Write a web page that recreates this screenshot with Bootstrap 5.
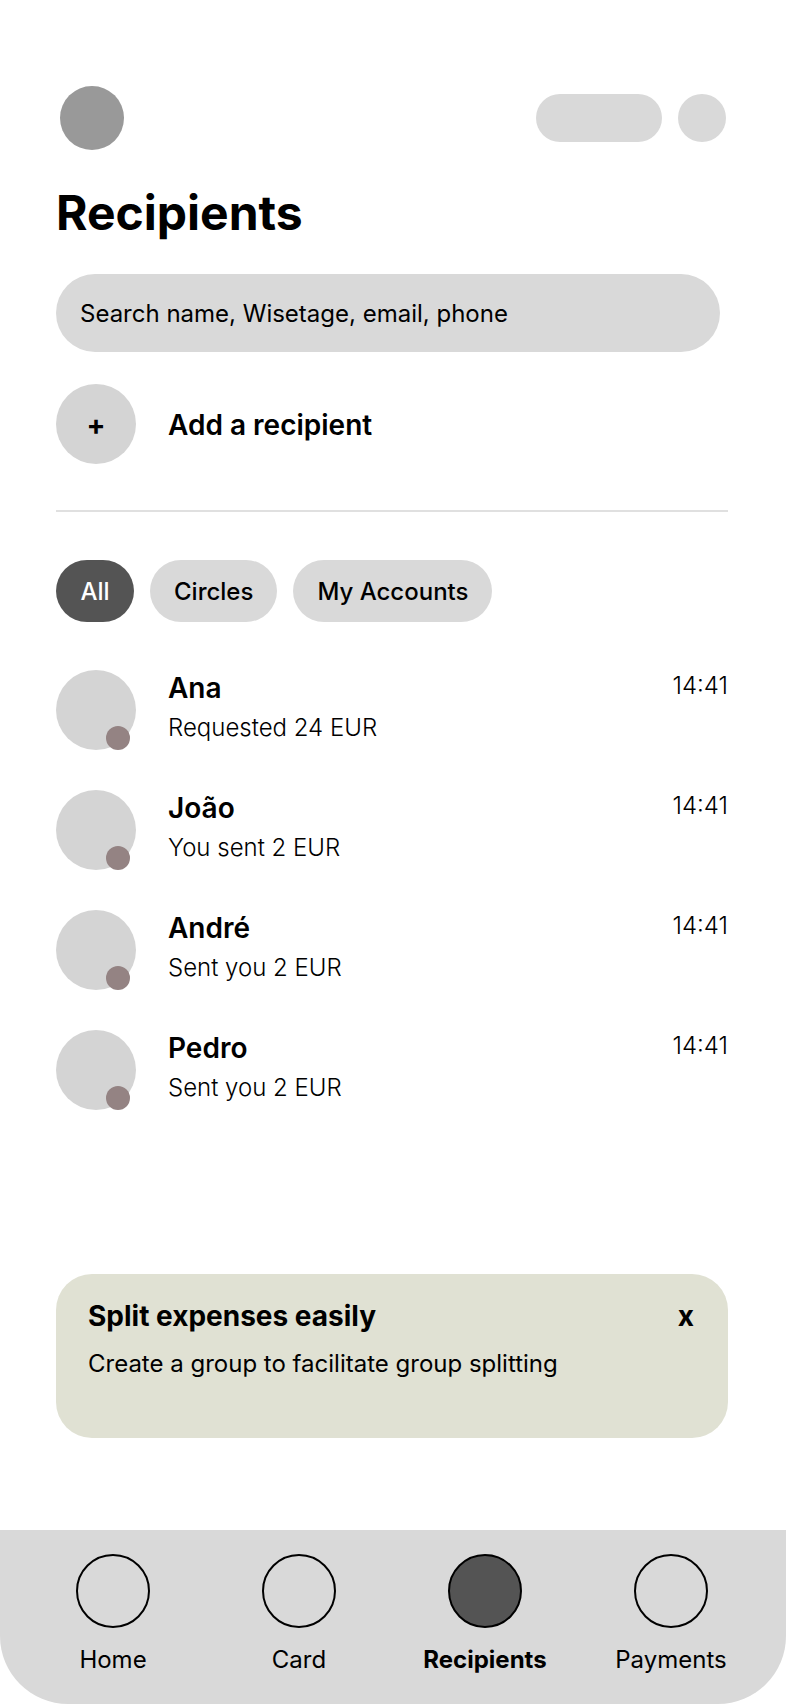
<!DOCTYPE html>
<html lang="en">
<head>
<meta charset="utf-8">
<meta name="viewport" content="width=device-width, initial-scale=1">
<title>Recipients</title>
<link rel="stylesheet" href="https://cdn.jsdelivr.net/npm/bootstrap@5.3.0/dist/css/bootstrap.min.css">
<style>
  body { font-family: Inter, "Liberation Sans", sans-serif; font-size: 24px; line-height: 32px; color: #000; background: #fff; }
  button { border: 0; padding: 0; color: inherit; background: none; }
  .screen { padding: 86px 58px 92px 56px; }
  .topbar { padding: 0 2px 0 4px; margin-bottom: 34px; }
  .profile-btn { width: 64px; height: 64px; background: #999; }
  .soft { background: #d9d9d9; }
  .earn-btn { width: 126px; height: 48px; }
  .eye-btn { width: 48px; height: 48px; }
  .page-title { font-size: 48px; line-height: 58px; font-weight: 700; margin-bottom: 32px; }
  .search-form { margin: 0 8px 32px 0; }
  .search-box, .search-box:focus { padding: 24px; border: 0; font-size: 24px; line-height: 30px; height: 78px; color: #000; background: #d9d9d9; }
  .search-box::placeholder { color: #000; opacity: 1; }
  .disc { position: relative; flex: none; width: 80px; height: 80px; border-radius: 50%; background: #d4d4d4; }
  .disc-dot { position: absolute; right: 6px; bottom: 0; width: 24px; height: 24px; border-radius: 50%; background: #948383; }
  .row-gap { gap: 32px; }
  .item-title { font-size: 28px; line-height: 36px; font-weight: 600; margin: 0; }
  .add-row .disc, .add-row .item-title { padding-top: 2px; }
  .add-row .disc { font-size: 28px; }
  .thin { font-weight: 300; }
  .rule { height: 2px; margin: 46px 0 48px; border: 0; opacity: 1; background: #e0e0e0; }
  .chip { min-width: 78px; padding: 16px 24px 14px; font-weight: 500; background: #d9d9d9; }
  .chip.active { color: #fff; background: #545454; }
  .people { gap: 40px; margin: 48px 0; }
  .person-text { gap: 6px; }
  .promo { min-height: 164px; padding: 24px 34px 24px 32px; border-radius: 36px; gap: 14px; background: #e0e1d3; }
  .bold { font-weight: 700; }
  .tabbar { padding: 24px 22px 28px 20px; border-radius: 0 0 68px 68px; background: #d9d9d9; }
  .tab-link { flex: 1 1 0; gap: 16px; color: #000; text-decoration: none; }
  .tab-ring { width: 74px; height: 74px; border: 2px solid #000; border-radius: 50%; }
  .tab-link.active { font-weight: 700; }
  .tab-link.active .tab-ring { background: #545454; }
</style>
</head>
<body class="d-flex flex-column min-vh-100">
<main class="screen d-flex flex-column flex-grow-1">
  <header class="topbar d-flex align-items-center justify-content-between">
    <button type="button" class="profile-btn rounded-circle" aria-label="Profile"></button>
    <div class="d-flex gap-3">
      <button type="button" class="earn-btn soft rounded-pill" aria-label="Rewards"></button>
      <button type="button" class="eye-btn soft rounded-circle" aria-label="Options"></button>
    </div>
  </header>
  <h1 class="page-title">Recipients</h1>
  <form class="search-form" role="search">
    <input type="search" class="search-box form-control rounded-pill" placeholder="Search name, Wisetage, email, phone" aria-label="Search recipients">
  </form>
  <button type="button" class="add-row d-flex align-items-center row-gap text-start">
    <span class="disc d-flex align-items-center justify-content-center bold">+</span>
    <span class="item-title">Add a recipient</span>
  </button>
  <hr class="rule">
  <div class="d-flex flex-wrap gap-3" role="group" aria-label="Filter">
    <button type="button" class="chip active rounded-pill" aria-pressed="true">All</button>
    <button type="button" class="chip rounded-pill" aria-pressed="false">Circles</button>
    <button type="button" class="chip rounded-pill" aria-pressed="false">My Accounts</button>
  </div>
  <ul class="people list-unstyled d-flex flex-column">
    <li class="d-flex row-gap">
      <span class="disc"><span class="disc-dot"></span></span>
      <div class="person-text d-flex flex-column flex-grow-1"><h2 class="item-title">Ana</h2><span class="thin">Requested 24 EUR</span></div>
      <time class="thin">14:41</time>
    </li>
    <li class="d-flex row-gap">
      <span class="disc"><span class="disc-dot"></span></span>
      <div class="person-text d-flex flex-column flex-grow-1"><h2 class="item-title">João</h2><span class="thin">You sent 2 EUR</span></div>
      <time class="thin">14:41</time>
    </li>
    <li class="d-flex row-gap">
      <span class="disc"><span class="disc-dot"></span></span>
      <div class="person-text d-flex flex-column flex-grow-1"><h2 class="item-title">André</h2><span class="thin">Sent you 2 EUR</span></div>
      <time class="thin">14:41</time>
    </li>
    <li class="d-flex row-gap">
      <span class="disc"><span class="disc-dot"></span></span>
      <div class="person-text d-flex flex-column flex-grow-1"><h2 class="item-title">Pedro</h2><span class="thin">Sent you 2 EUR</span></div>
      <time class="thin">14:41</time>
    </li>
  </ul>
  <section class="promo d-flex flex-column mt-auto">
    <div class="d-flex justify-content-between">
      <h2 class="item-title bold">Split expenses easily</h2>
      <button type="button" class="item-title bold" aria-label="Dismiss">x</button>
    </div>
    <p class="m-0">Create a group to facilitate group splitting</p>
  </section>
</main>
<nav class="tabbar d-flex" aria-label="Main">
  <a href="#home" class="tab-link d-flex flex-column align-items-center"><span class="tab-ring"></span>Home</a>
  <a href="#card" class="tab-link d-flex flex-column align-items-center"><span class="tab-ring"></span>Card</a>
  <a href="#recipients" class="tab-link active d-flex flex-column align-items-center" aria-current="page"><span class="tab-ring"></span>Recipients</a>
  <a href="#payments" class="tab-link d-flex flex-column align-items-center"><span class="tab-ring"></span>Payments</a>
</nav>
<script src="https://cdn.jsdelivr.net/npm/bootstrap@5.3.0/dist/js/bootstrap.bundle.min.js"></script>
</body>
</html>
